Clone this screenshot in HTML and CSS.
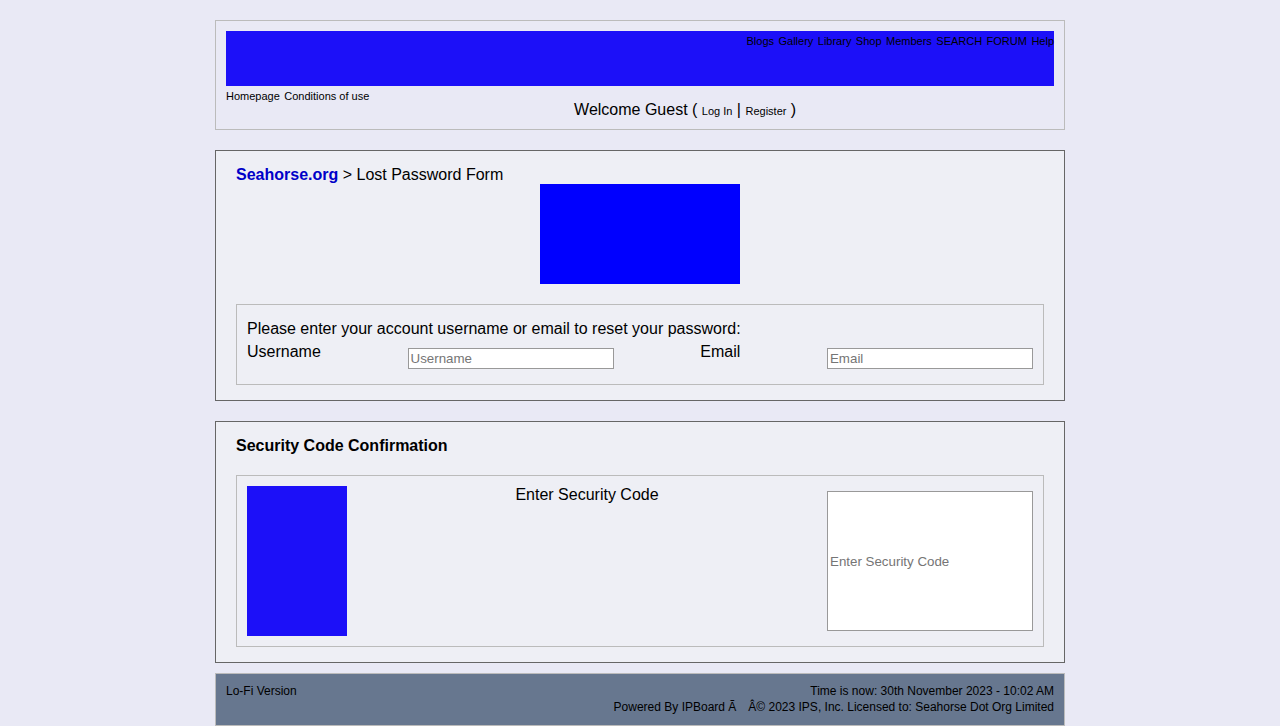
FILE: index.html
```html
<!DOCTYPE html>
<html lang="en">
<head>
<meta charset="utf-8">
<title>Lost Password Form</title>
<link rel="stylesheet" href="styles.css">
</head>
<body>
<div class="page">
  <header class="header">
    <nav class="banner">
      <a href="#">Blogs</a>
      <a href="#">Gallery</a>
      <a href="#">Library</a>
      <a href="#">Shop</a>
      <a href="#">Members</a>
      <a href="#">SEARCH</a>
      <a href="#">FORUM</a>
      <a href="#">Help</a>
    </nav>
    <div class="subheader">
      <nav>
        <a href="#">Homepage</a>
        <a href="#">Conditions of use</a>
      </nav>
      <p class="welcome">Welcome Guest ( <a href="#">Log In</a> | <a href="#">Register</a> )</p>
    </div>
  </header>

  <main>
    <section class="panel">
      <div><a class="crumb" href="#">Seahorse.org</a> &gt; Lost Password Form</div>
      <div class="picture"></div>
      <form class="box">
        <p class="hint">Please enter your account username or email to reset your password:</p>
        <div class="row">
          <label for="username">Username</label>
          <input class="field" id="username" type="text" placeholder="Username">
          <label for="email">Email</label>
          <input class="field" id="email" type="email" placeholder="Email">
        </div>
      </form>
    </section>

    <section class="panel">
      <h1 class="title">Security Code Confirmation</h1>
      <form class="box row">
        <div class="captcha"></div>
        <label for="code">Enter Security Code</label>
        <input class="field" id="code" type="text" placeholder="Enter Security Code">
      </form>
    </section>
  </main>

  <footer class="footer">
    <a class="lofi" href="#">Lo-Fi Version</a>
    <div class="legal">
      <div>Time is now: 30th November 2023 - 10:02 AM</div>
      <div>Powered By IPBoard Ã&emsp;Â© 2023 IPS, Inc. Licensed to: Seahorse Dot Org Limited</div>
    </div>
  </footer>
</div>
</body>
</html>
```
FILE: styles.css
```css
* { box-sizing: border-box; }

body {
  margin: 0;
  background: #e9e9f5;
  color: #000;
  font: 16px/18px "Liberation Sans", Arial, sans-serif;
}

.page {
  max-width: 850px;
  margin: 0 auto;
  padding-top: 20px;
}

.header {
  padding: 10px 10px 9px;
  border: 1px solid #bbb;
}

.header a {
  color: #000;
  font-size: 11px;
  text-decoration: none;
}

.banner {
  min-height: 55px;
  background: #1c10f8;
  text-align: right;
}

.subheader { display: flex; }

.welcome {
  flex: 1;
  margin: 0;
  padding: 15px 53px 0 0;
  text-align: center;
}

.panel {
  margin-top: 20px;
  padding: 15px 20px;
  border: 1px solid #666;
  background: #eeeff5;
}

.crumb {
  color: #0000c8;
  font-weight: bold;
  text-decoration: none;
}

.picture {
  width: 200px;
  height: 100px;
  margin: 0 auto;
  background: #00f;
}

.box {
  margin-top: 20px;
  padding: 10px;
  border: 1px solid #bbb;
}

.hint { margin: 5px 0; }

.row {
  display: flex;
  justify-content: space-between;
}

.field {
  width: 206px;
  margin: 5px 0;
  padding: 2px;
  border: 1px solid #999;
  background: #fff;
  font-family: "Liberation Sans", Arial, sans-serif;
}

.field::placeholder { color: #757575; }

.title {
  margin: 0;
  font-size: 16px;
}

.captcha {
  width: 100px;
  height: 150px;
  background: #1c10f8;
}

.footer {
  display: flex;
  justify-content: space-between;
  margin-top: 10px;
  padding: 9px 10px 10px;
  border: 1px solid #bbb;
  background: #67778f;
  font-size: 12px;
  line-height: 16px;
}

.lofi {
  color: #000;
  text-decoration: none;
}

.legal { text-align: right; }
```
